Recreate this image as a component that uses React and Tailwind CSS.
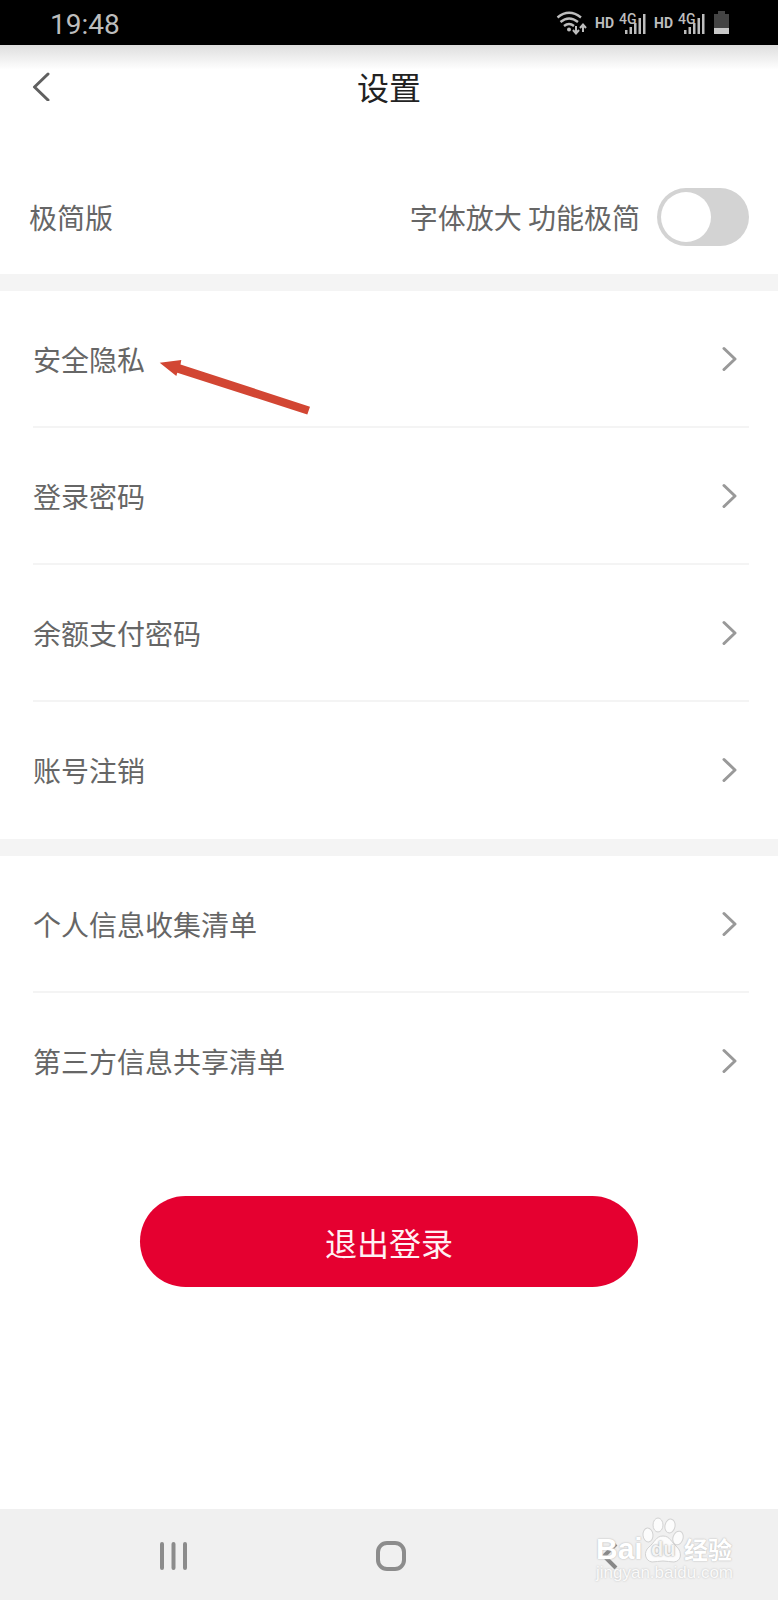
import { useState } from 'react';

const accountItems = [
  { id: 'privacy', name: '安全隐私', marked: true },
  { id: 'login-password', name: '登录密码' },
  { id: 'pay-password', name: '余额支付密码' },
  { id: 'cancel', name: '账号注销' },
];

const listItems = [
  { id: 'collect', name: '个人信息收集清单' },
  { id: 'share', name: '第三方信息共享清单' },
];

const WifiIcon = () => (
  <svg className="w-8 h-6" viewBox="0 0 32 24" fill="none" stroke="#bdbdbd" strokeWidth="2.4">
    <path d="M1.500 6.500Q13 -3 25 6.500" />
    <path d="M4.500 11Q13 4 22 11" />
    <path d="M8 15Q13 11 18 15" />
    <circle cx="13" cy="18.500" r="2" fill="#bdbdbd" stroke="none" />
    <path d="M20 15v7M17 19l3 3.500 3-3.500" strokeWidth="2" />
    <path d="M27 21v-7M24 17l3-3.500 3 3.500" strokeWidth="2" />
  </svg>
);

const Signal = () => (
  <div className="flex items-center">
    <span className="w-6 text-[14px] leading-6 font-bold">HD</span>
    <div className="relative w-7 h-6">
      <svg className="w-7 h-6" viewBox="0 0 28 24" fill="#bdbdbd">
        <rect x="6" y="19" width="2.500" height="4" />
        <rect x="10.500" y="16" width="2.500" height="7" />
        <rect x="15" y="12" width="2.500" height="11" />
        <rect x="19.500" y="7" width="2.500" height="16" />
        <rect x="24" y="3" width="2.500" height="20" />
      </svg>
      <span className="absolute left-0 top-0 text-[14px] leading-4 font-medium">4G</span>
    </div>
  </div>
);

const StatusBar = () => (
  <div className="flex items-center justify-between h-[45px] pl-[50px] pr-12 bg-black text-[#bdbdbd] font-[Roboto,sans-serif]">
    <span className="pt-1 text-[28px] leading-8">19:48</span>
    <div className="flex items-center gap-[7px] pt-px">
      <WifiIcon />
      <Signal />
      <Signal />
      <svg className="w-[17px] h-6" viewBox="0 0 17 24">
        <path d="M5 0h7v3h4v14H1V3h4z" fill="#444" />
        <path d="M1 17h15v6H1z" fill="#c8c8c8" />
      </svg>
    </div>
  </div>
);

const PointerArrow = () => (
  <svg className="absolute left-[159px] top-[69px] w-[152px] h-14" viewBox="0 0 152 56" fill="#d24633">
    <path d="M0.700 2.700L22.300 0L21.500 4.400L151 46.700L148.300 54.500L18.300 12.700L17.300 16Z" />
  </svg>
);

const SettingsRow = ({ item, last }) => (
  <li className="relative pl-[33px] pr-[29px]">
    <a
      href={`#${item.id}`}
      className={`flex items-center justify-between h-[137px] pr-3 border-b-2 ${last ? 'border-transparent' : 'border-[#f4f4f4]'}`}
    >
      <span>{item.name}</span>
      <svg className="w-4 h-[26px]" viewBox="0 0 16 26" fill="none" stroke="#999" strokeWidth="3" strokeLinecap="round" strokeLinejoin="round">
        <path d="M3 2.500L14 13L3 23.500" />
      </svg>
    </a>
    {item.marked && <PointerArrow />}
  </li>
);

const SettingsGroup = ({ items }) => (
  <ul className="border-t-[17px] border-[#f4f4f4]">
    {items.map((item, index) => (
      <SettingsRow key={item.id} item={item} last={index === items.length - 1} />
    ))}
  </ul>
);

const Watermark = () => (
  <div className="absolute right-[43px] top-0 w-[139px] pt-2 text-white pointer-events-none">
    <div className="flex items-end h-[46px] [text-shadow:0_0_2px_#bbb,0_0_1px_#ccc]">
      <span className="w-[46px] text-[30px] leading-7 font-bold font-['Liberation_Sans',sans-serif]">Bai</span>
      <div className="relative shrink-0 w-[42px] h-[46px]">
        <svg className="w-[42px] h-[46px]" viewBox="0 0 42 46" fill="#fcfcfc" stroke="#d2d2d2" strokeWidth="1">
          <ellipse cx="6" cy="18" rx="5" ry="7" transform="rotate(-6 6 18)" />
          <ellipse cx="16" cy="8" rx="5" ry="7" />
          <ellipse cx="28" cy="9" rx="5" ry="7" transform="rotate(12 28 9)" />
          <ellipse cx="36" cy="21" rx="5" ry="7" transform="rotate(18 36 21)" />
          <path d="M21 19C14 19 13 25 7 30C1 35 3 44 10 45C14 45 17 44 21 44C25 44 28 45 32 45C40 44 40 35 35 30C29 25 28 19 21 19Z" />
        </svg>
        <span className="absolute left-[9px] bottom-1 text-[20px] leading-5 font-bold text-[#f4f4f4] [text-shadow:0_0_2px_#888] font-['Liberation_Sans',sans-serif]">du</span>
      </div>
      <span className="shrink-0 text-[24px] leading-7 font-bold">经验</span>
    </div>
    <p className="text-[17px] leading-5 text-[#fafafa] font-['Liberation_Sans',sans-serif] [text-shadow:0_0_2px_#bbb]">jingyan.baidu.com</p>
  </div>
);

const NavBar = () => (
  <nav className="relative grid grid-cols-3 items-center justify-items-center h-[91px] pl-[66px] pr-[62px] pt-[3px] bg-[#f0f0f0]">
    <button type="button" aria-label="最近任务">
      <svg className="w-8 h-8" viewBox="0 0 32 32" stroke="#8c8c8c" strokeWidth="4" strokeLinecap="round">
        <path d="M4 4v24M15.500 4v24M27 4v24" />
      </svg>
    </button>
    <button type="button" aria-label="主屏幕">
      <svg className="w-8 h-8" viewBox="0 0 32 32" fill="none" stroke="#8c8c8c" strokeWidth="4">
        <rect x="3" y="3" width="26" height="26" rx="9" />
      </svg>
    </button>
    <button type="button" aria-label="返回">
      <svg className="w-8 h-8" viewBox="0 0 32 32" fill="none" stroke="#888" strokeWidth="4">
        <path d="M24 4L12 16L24 28" />
      </svg>
    </button>
    <Watermark />
  </nav>
);

const App = () => {
  const [simple, setSimple] = useState(false);

  return (
    <div className="flex flex-col min-h-screen bg-white text-[28px] leading-10 text-[#666] font-['Noto_Sans_CJK_SC',sans-serif]">
      <StatusBar />
      <header className="grid grid-cols-3 items-center h-[82px] pl-8 pr-8 bg-linear-to-b from-[#dedede] to-white to-30%">
        <button type="button" aria-label="返回" className="justify-self-start">
          <svg className="w-[18px] h-[30px]" viewBox="0 0 18 30" fill="none" stroke="#606060" strokeWidth="3" strokeLinecap="round" strokeLinejoin="round">
            <path d="M16 3L2.500 16L16 29" />
          </svg>
        </button>
        <h1 className="text-center text-[32px] leading-10 text-[#222]">设置</h1>
      </header>
      <main className="flex-1">
        <label className="flex items-center h-[147px] pl-[29px] pr-[29px] pt-8">
          <span className="flex-1">极简版</span>
          <span className="mr-[17px]">字体放大 功能极简</span>
          <input
            type="checkbox"
            checked={simple}
            onChange={(e) => setSimple(e.target.checked)}
            className="appearance-none w-[92px] h-[58px] p-1 rounded-full bg-[#d3d3d3] checked:bg-[#e50030] before:block before:size-[50px] before:rounded-full before:bg-white checked:before:ml-auto"
          />
        </label>
        <SettingsGroup items={accountItems} />
        <SettingsGroup items={listItems} />
        <div className="flex justify-center pt-[66px] pb-10">
          <button type="button" className="w-[64%] h-[91px] rounded-full bg-[#e50030] text-[32px] text-[#fff0f3]">
            退出登录
          </button>
        </div>
      </main>
      <NavBar />
    </div>
  );
};

export default App;
